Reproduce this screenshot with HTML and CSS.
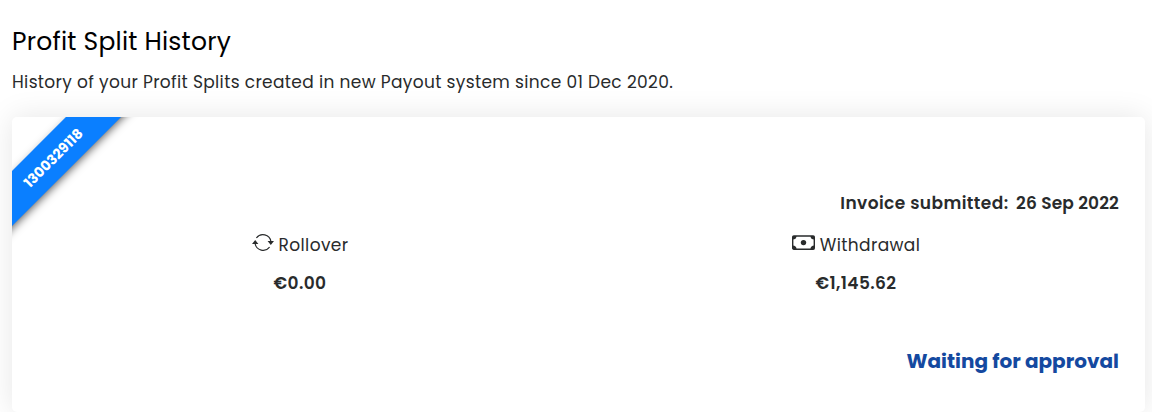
FILE: index.html
```html
<!DOCTYPE html>
<html lang="en">
<head>
<meta charset="utf-8">
<title>Profit Split History</title>
<link rel="stylesheet" href="styles.css">
</head>
<body>
<main class="page">
  <h1 class="title">Profit Split History</h1>
  <p class="intro">History of your Profit Splits created in new Payout system since 01 Dec 2020.</p>
  <section class="card">
    <div class="corner"><span class="ribbon">1300329118</span></div>
    <p class="date"><span>Invoice submitted:</span><span class="day">26 Sep 2022</span></p>
    <div class="columns">
      <div class="column">
        <div class="label">
          <svg class="icon" width="22" height="18" viewBox="0 0 22 18" fill="none" stroke="#292b2c" stroke-width="1.2">
            <path d="M4.4 4A8.1 8.1 0 0 1 18.9 7.5M17.6 13A8.1 8.1 0 0 1 3.1 9.5"/>
            <path d="M0 10 3.2 6 6.4 10ZM15.6 7 18.8 11 22 7Z" fill="#292b2c" stroke="none"/>
          </svg>
          <span>Rollover</span>
        </div>
        <strong class="amount">€0.00</strong>
      </div>
      <div class="column">
        <div class="label">
          <svg class="icon" width="23" height="18" viewBox="0 0 23 18">
            <rect x=".7" y="2" width="21.6" height="13.2" rx="1.2" fill="none" stroke="#292b2c" stroke-width="1.4"/>
            <path d="M.7 2H4.6A3.9 3.9 0 0 1 .7 5.6ZM22.3 2H18.4A3.9 3.9 0 0 0 22.3 5.6ZM.7 15.2V11.6A3.9 3.9 0 0 1 4.6 15.2ZM22.3 15.2V11.6A3.9 3.9 0 0 0 18.4 15.2Z" fill="#292b2c"/>
            <circle cx="11.5" cy="8.6" r="2.7" fill="#292b2c"/>
          </svg>
          <span>Withdrawal</span>
        </div>
        <strong class="amount">€1,145.62</strong>
      </div>
    </div>
    <p class="status">Waiting for approval</p>
  </section>
</main>
</body>
</html>
```
FILE: styles.css
```css
* { box-sizing: border-box; }
body {
  margin: 0;
  height: 412px;
  overflow: hidden;
  background: #fff;
  color: #292b2c;
  font: 17px/26px Poppins, Inter, sans-serif;
  letter-spacing: .34px;
}
.page { padding: 24px 7px 0 12px; }
.title { margin: 0; color: #000; font-size: 25px; line-height: 36px; font-weight: 400; letter-spacing: .22px; }
.intro { margin: 9px 0 22px; white-space: nowrap; }
.card {
  position: relative;
  height: 295px;
  padding: 73px 11px 0 10px;
  border-radius: 5px;
  background: #fff;
  box-shadow: 0 0 30px rgba(0, 0, 0, .1);
}
.corner { position: absolute; left: 0; top: 0; width: 150px; height: 150px; overflow: hidden; border-radius: 5px 0 0; }
.ribbon {
  position: absolute;
  left: -59px;
  top: 21px;
  width: 200px;
  height: 39px;
  background: #0a7fff;
  box-shadow: 0 3px 10px -2px rgba(0, 0, 0, .7);
  color: #fff;
  font-size: 14px;
  font-weight: 700;
  line-height: 40px;
  letter-spacing: 0;
  text-align: center;
  transform: rotate(-45deg);
}
.date { display: flex; justify-content: flex-end; gap: 7.5px; margin: 0 15px 16px 0; font-weight: 600; letter-spacing: .42px; }
.day { letter-spacing: .14px; }
.columns { display: grid; grid-template-columns: 1fr 1fr; }
.column { display: flex; flex-direction: column; align-items: center; gap: 12px; }
.label { display: flex; align-items: center; gap: 5px; height: 26px; letter-spacing: .38px; }
.icon { position: relative; top: -2px; }
.amount { font-weight: 600; letter-spacing: .4px; }
.status { margin: 50px 15px 0 0; color: #1449a0; font-size: 20px; line-height: 30px; font-weight: 700; letter-spacing: 0; text-align: right; }
```
